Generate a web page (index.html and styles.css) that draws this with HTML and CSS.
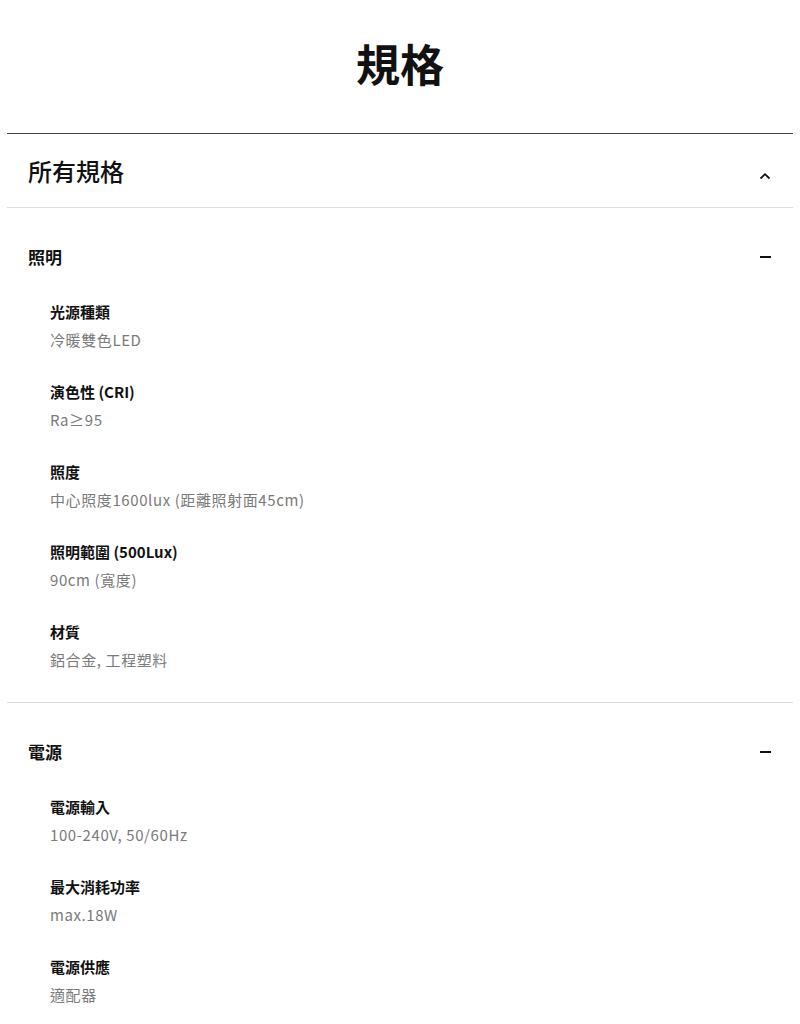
FILE: index.html
```html
<!DOCTYPE html>
<html lang="zh-Hant">
<head>
    <meta charset="UTF-8">
    <meta name="viewport" content="width=device-width, initial-scale=1.0">
    <title>規格</title>
    <link rel="stylesheet" href="styles.css">
</head>
<body>
    <div class="specs">
        <h1 class="specs-title">規格</h1>

        <div class="specs-all">
            <h2>所有規格</h2>
            <svg class="chevron" width="12" height="8" viewBox="0 0 12 8">
                <path d="M1.5 6.5 L6 2.2 L10.5 6.5" fill="none" stroke="#111" stroke-width="1.8"/>
            </svg>
        </div>

        <div class="spec-group">
            <div class="group-head">
                <h3>照明</h3>
                <span class="minus"></span>
            </div>
            <ul class="spec-list">
                <li><div class="label">光源種類</div><div class="value">冷暖雙色LED</div></li>
                <li><div class="label">演色性 (CRI)</div><div class="value">Ra≥95</div></li>
                <li><div class="label">照度</div><div class="value">中心照度1600lux (距離照射面45cm)</div></li>
                <li><div class="label">照明範圍 (500Lux)</div><div class="value">90cm (寬度)</div></li>
                <li><div class="label">材質</div><div class="value">鋁合金, 工程塑料</div></li>
            </ul>
        </div>

        <div class="spec-group">
            <div class="group-head">
                <h3>電源</h3>
                <span class="minus"></span>
            </div>
            <ul class="spec-list">
                <li><div class="label">電源輸入</div><div class="value">100-240V, 50/60Hz</div></li>
                <li><div class="label">最大消耗功率</div><div class="value">max.18W</div></li>
                <li><div class="label">電源供應</div><div class="value">適配器</div></li>
            </ul>
        </div>
    </div>
</body>
</html>
```

FILE: styles.css
```css
body {
    margin: 0;
    background: #fff;
    color: #111;
    font-family: "Noto Sans CJK TC", "Noto Sans", sans-serif;
}
.specs {
    padding: 0 7px;
}
.specs-title {
    margin: 0;
    padding-top: 36px;
    height: 134px;
    box-sizing: border-box;
    font-size: 44px;
    line-height: 54px;
    font-weight: 700;
    text-align: center;
    border-bottom: 1px solid #444;
}
.specs-all {
    display: flex;
    align-items: center;
    justify-content: space-between;
    padding: 25px 22px 24px 21px;
    border-bottom: 1px solid #ddd;
}
.specs-all h2 {
    margin: 0;
    font-size: 24px;
    line-height: 24px;
    font-weight: 500;
}
.chevron {
    margin-top: 9px;
}
.spec-group {
    border-bottom: 1px solid #ddd;
}
.group-head {
    display: flex;
    align-items: center;
    justify-content: space-between;
    padding: 37px 22px 0 21px;
}
.group-head h3 {
    margin: 0;
    font-size: 17px;
    line-height: 24px;
    font-weight: 700;
}
.minus {
    width: 11px;
    height: 2px;
    background: #111;
}
.spec-list {
    list-style: none;
    margin: 0;
    padding: 30px 0 29px 43px;
}
.spec-list li {
    margin-bottom: 26px;
}
.spec-list li:last-child {
    margin-bottom: 0;
}
.label {
    font-size: 15px;
    line-height: 26px;
    font-weight: 700;
}
.value {
    margin-top: 2px;
    font-size: 15px;
    line-height: 26px;
    letter-spacing: 0.6px;
    color: #7a7a7a;
}
```
